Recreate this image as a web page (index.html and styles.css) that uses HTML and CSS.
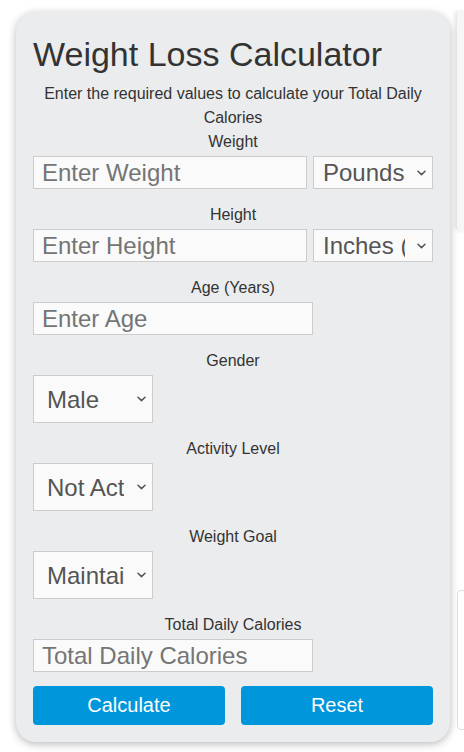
FILE: index.html
```html
<!DOCTYPE html>
<html lang="en">
<head>
<meta charset="utf-8">
<title>Weight Loss Calculator</title>
<link rel="stylesheet" href="styles.css">
</head>
<body>
<div class="page">
  <main class="card">
    <h1 class="title">Weight Loss Calculator</h1>
    <p class="intro">Enter the required values to calculate your Total Daily Calories</p>

    <div class="group">
      <label class="label" for="weight">Weight</label>
      <div class="row">
        <input class="field field-wide" id="weight" type="text" placeholder="Enter Weight">
        <span class="select-wrap">
          <select class="unit">
            <option>Pounds</option>
            <option>Kilograms</option>
          </select>
          <svg class="chev" width="9" height="6" viewBox="0 0 9 6" aria-hidden="true"><path d="M1 1.2 L4.5 4.6 L8 1.2" fill="none" stroke="#555" stroke-width="1.5" stroke-linecap="round" stroke-linejoin="round"/></svg>
        </span>
      </div>
    </div>

    <div class="group">
      <label class="label" for="height">Height</label>
      <div class="row">
        <input class="field field-wide" id="height" type="text" placeholder="Enter Height">
        <span class="select-wrap">
          <select class="unit">
            <option>Inches (in)</option>
            <option>Centimeters (cm)</option>
          </select>
          <svg class="chev" width="9" height="6" viewBox="0 0 9 6" aria-hidden="true"><path d="M1 1.2 L4.5 4.6 L8 1.2" fill="none" stroke="#555" stroke-width="1.5" stroke-linecap="round" stroke-linejoin="round"/></svg>
        </span>
      </div>
    </div>

    <div class="group">
      <label class="label" for="age">Age (Years)</label>
      <div class="row">
        <input class="field field-mid" id="age" type="text" placeholder="Enter Age">
      </div>
    </div>

    <div class="group">
      <label class="label" for="gender">Gender</label>
      <div class="row">
        <span class="select-wrap">
          <select class="choice" id="gender">
            <option>Male</option>
            <option>Female</option>
          </select>
          <svg class="chev" width="9" height="6" viewBox="0 0 9 6" aria-hidden="true"><path d="M1 1.2 L4.5 4.6 L8 1.2" fill="none" stroke="#555" stroke-width="1.5" stroke-linecap="round" stroke-linejoin="round"/></svg>
        </span>
      </div>
    </div>

    <div class="group">
      <label class="label" for="activity">Activity Level</label>
      <div class="row">
        <span class="select-wrap">
          <select class="choice" id="activity">
            <option>Not Active</option>
            <option>Lightly Active</option>
            <option>Moderately Active</option>
            <option>Very Active</option>
          </select>
          <svg class="chev" width="9" height="6" viewBox="0 0 9 6" aria-hidden="true"><path d="M1 1.2 L4.5 4.6 L8 1.2" fill="none" stroke="#555" stroke-width="1.5" stroke-linecap="round" stroke-linejoin="round"/></svg>
        </span>
      </div>
    </div>

    <div class="group">
      <label class="label" for="goal">Weight Goal</label>
      <div class="row">
        <span class="select-wrap">
          <select class="choice" id="goal">
            <option>Maintain Weight</option>
            <option>Lose Weight</option>
            <option>Gain Weight</option>
          </select>
          <svg class="chev" width="9" height="6" viewBox="0 0 9 6" aria-hidden="true"><path d="M1 1.2 L4.5 4.6 L8 1.2" fill="none" stroke="#555" stroke-width="1.5" stroke-linecap="round" stroke-linejoin="round"/></svg>
        </span>
      </div>
    </div>

    <div class="group">
      <label class="label" for="total">Total Daily Calories</label>
      <div class="row">
        <input class="field field-mid" id="total" type="text" placeholder="Total Daily Calories" readonly>
      </div>
    </div>

    <div class="actions">
      <button class="btn" type="button">Calculate</button>
      <button class="btn" type="button">Reset</button>
    </div>
  </main>
  <aside class="side">
    <div class="side-top"></div>
    <div class="side-bottom"></div>
  </aside>
</div>
</body>
</html>
```

FILE: styles.css
```css
* {
  box-sizing: border-box;
}

html, body {
  margin: 0;
  padding: 0;
  background: #ffffff;
}

body {
  font-family: "Liberation Sans", Arial, sans-serif;
  color: #333333;
  overflow: hidden;
}

.page {
  display: flex;
  align-items: flex-start;
  padding: 12px 0 0 16px;
  gap: 7px;
  width: 464px;
  height: 752px;
  overflow: hidden;
}

.card {
  flex: none;
  width: 434px;
  background: #ebeced;
  border-radius: 20px;
  padding: 22px 17px 17px;
  box-shadow: 0 2px 8px rgba(0, 0, 0, 0.28);
}

.title {
  margin: 0;
  font-size: 34px;
  line-height: 40px;
  font-weight: normal;
  color: #333333;
}

.intro {
  margin: 8px 0 0;
  font-size: 16px;
  line-height: 24px;
  text-align: center;
}

.group {
  display: flex;
  flex-direction: column;
  margin-bottom: 14px;
}

.label {
  display: block;
  font-size: 16px;
  line-height: 24px;
  text-align: center;
}

.row {
  display: flex;
  gap: 6px;
  margin-top: 2px;
}

.field {
  height: 33px;
  border: 1px solid #cccccc;
  background: #fafafa;
  font-family: "Liberation Sans", Arial, sans-serif;
  font-size: 24px;
  color: #555555;
  padding: 0 8px;
  border-radius: 0;
  outline: none;
}

.field::placeholder {
  color: #757575;
}

.field-wide {
  width: 274px;
}

.field-mid {
  width: 280px;
}

.select-wrap {
  position: relative;
  display: block;
  width: 120px;
  flex: none;
}

.unit,
.choice {
  display: block;
  width: 120px;
  appearance: none;
  -webkit-appearance: none;
  font-family: "Liberation Sans", Arial, sans-serif;
  font-size: 24px;
  color: #555555;
  background-color: #fafafa;
  border: 1px solid #cccccc;
  border-radius: 0;
  outline: none;
  margin: 0;
}

.unit {
  height: 33px;
  padding: 0 27px 0 9px;
}

.choice {
  height: 48px;
  padding: 0 28px 0 13px;
}

.chev {
  position: absolute;
  right: 7px;
  top: 50%;
  margin-top: -3px;
  pointer-events: none;
}

.actions {
  display: flex;
  gap: 16px;
}

.btn {
  flex: 1;
  height: 39px;
  border: none;
  border-radius: 4px;
  background: #0096db;
  color: #ffffff;
  font-family: "Liberation Sans", Arial, sans-serif;
  font-size: 20px;
  padding: 0;
}

.side {
  flex: none;
  width: 10px;
  display: flex;
  flex-direction: column;
}

.side-top {
  height: 219px;
  background: #f6f6f6;
  border-radius: 0 0 6px 6px;
  box-shadow: -2px 0 4px rgba(0, 0, 0, 0.12);
}

.side-bottom {
  margin-top: 359px;
  height: 140px;
  border: 1px solid #dddddd;
  border-radius: 4px;
  background: #ffffff;
}
```
